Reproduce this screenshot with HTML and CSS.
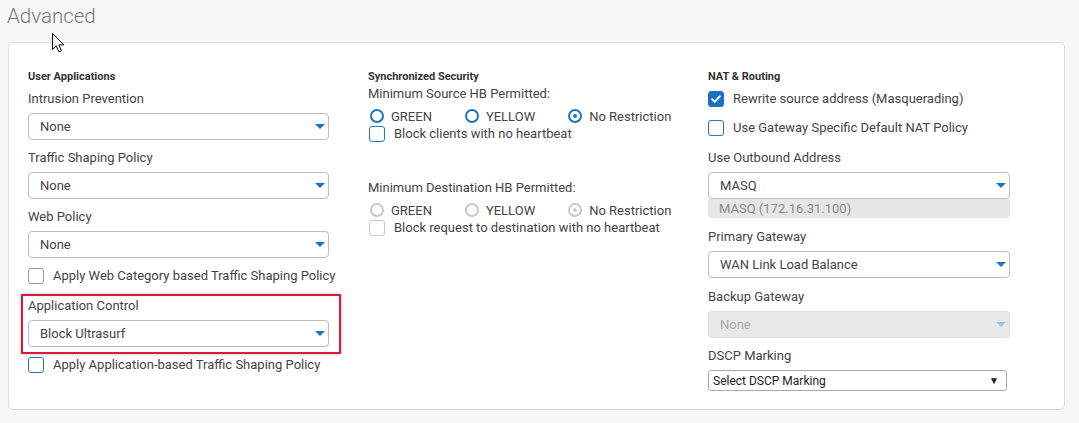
FILE: index.html
```html
<!DOCTYPE html>
<html>
<head>
<meta charset="utf-8">
<link rel="stylesheet" href="styles.css">
</head>
<body>
<h1 class="title">Advanced</h1>
<div class="card">
  <div class="col">
    <div class="heading">User Applications</div>
    <div class="group">
      <div class="label">Intrusion Prevention</div>
      <div class="select"><span>None</span><i class="caret"></i></div>
    </div>
    <div class="group">
      <div class="label">Traffic Shaping Policy</div>
      <div class="select"><span>None</span><i class="caret"></i></div>
    </div>
    <div class="group">
      <div class="label">Web Policy</div>
      <div class="select"><span>None</span><i class="caret"></i></div>
    </div>
    <div class="check"><i class="box"></i>Apply Web Category based Traffic Shaping Policy</div>
    <div class="highlight">
      <div class="label">Application Control</div>
      <div class="select"><span>Block Ultrasurf</span><i class="caret"></i></div>
    </div>
    <div class="check check-after"><i class="box box-blue"></i>Apply Application-based Traffic Shaping Policy</div>
  </div>

  <div class="col">
    <div class="heading">Synchronized Security</div>
    <div class="label label-tight">Minimum Source HB Permitted:</div>
    <div class="radios">
      <div class="radio"><i class="dot"></i>GREEN</div>
      <div class="radio"><i class="dot"></i>YELLOW</div>
      <div class="radio"><i class="dot dot-on"></i>No Restriction</div>
    </div>
    <div class="check check-tight"><i class="box box-blue"></i>Block clients with no heartbeat</div>
    <div class="label label-dest">Minimum Destination HB Permitted:</div>
    <div class="radios disabled">
      <div class="radio"><i class="dot"></i>GREEN</div>
      <div class="radio"><i class="dot"></i>YELLOW</div>
      <div class="radio"><i class="dot dot-on"></i>No Restriction</div>
    </div>
    <div class="check check-tight disabled"><i class="box"></i>Block request to destination with no heartbeat</div>
  </div>

  <div class="col">
    <div class="heading">NAT &amp; Routing</div>
    <div class="check check-first"><i class="box box-checked"><svg viewBox="0 0 16 16" width="16" height="16"><path d="M3.5 8.2 L6.6 11.2 L12.5 4.8" fill="none" stroke="#fff" stroke-width="2.2" stroke-linecap="round" stroke-linejoin="round"/></svg></i>Rewrite source address (Masquerading)</div>
    <div class="check check-second"><i class="box box-blue"></i>Use Gateway Specific Default NAT Policy</div>
    <div class="group group-r">
      <div class="label">Use Outbound Address</div>
      <div class="select"><span>MASQ</span><i class="caret"></i></div>
      <div class="sub">MASQ (172.16.31.100)</div>
    </div>
    <div class="group group-r">
      <div class="label">Primary Gateway</div>
      <div class="select"><span>WAN Link Load Balance</span><i class="caret"></i></div>
    </div>
    <div class="group group-r">
      <div class="label">Backup Gateway</div>
      <div class="select select-disabled"><span>None</span><i class="caret"></i></div>
    </div>
    <div class="group group-r group-dscp">
      <div class="label">DSCP Marking</div>
      <div class="native"><span>Select DSCP Marking</span><span class="narrow">&#9660;</span></div>
    </div>
  </div>
</div>
<svg class="cursor" width="13" height="20" viewBox="0 0 13 20"><path d="M0.5 0.5 L0.5 16.5 L4.3 12.9 L6.8 18.8 L9.4 17.7 L6.9 11.9 L11.8 11.9 Z" fill="#fff" stroke="#000" stroke-width="1" stroke-linejoin="miter"/></svg>
</body>
</html>
```

FILE: styles.css
```css
* { box-sizing: border-box; }
html, body { margin: 0; padding: 0; }
body {
  background: #f7f7f7;
  font-family: Roboto, "Liberation Sans", Arial, sans-serif;
  color: #444;
  font-size: 13px;
  width: 1079px;
  height: 423px;
  position: relative;
  overflow: hidden;
}
.title {
  margin: 0;
  padding: 4px 0 0 7px;
  height: 42px;
  font-size: 20.5px;
  line-height: 24px;
  font-weight: 300;
  color: #777;
}
.card {
  margin: 0 14px 0 8px;
  height: 368px;
  background: #fff;
  border: 1px solid #dedede;
  border-radius: 5px;
  padding: 27px 0 0 19px;
  display: grid;
  grid-template-columns: 340px 340px 340px;
  align-items: start;
}
.col { display: flex; flex-direction: column; }
.heading {
  font-size: 11px;
  line-height: 14px;
  font-weight: 700;
  color: #333;
  margin-bottom: 6px;
}
.label { line-height: 18px; margin-bottom: 5px; white-space: nowrap; }
.group { margin-bottom: 9px; width: 301px; }
.select {
  height: 27px;
  border: 1px solid #bdbdbd;
  border-radius: 4px;
  background: #fff;
  display: flex;
  align-items: center;
  justify-content: space-between;
  padding: 0 3px 0 11px;
  color: #444;
}
.caret {
  width: 0; height: 0;
  border-left: 5px solid transparent;
  border-right: 5px solid transparent;
  border-top: 5px solid #1c74c8;
}
.select-disabled { background: #e8e8e8; border-color: #e0e0e0; color: #aaa; }
.select-disabled .caret { border-top-color: #9cc7ec; }
.check {
  display: flex;
  align-items: center;
  line-height: 18px;
  height: 18px;
  white-space: nowrap;
}
.box {
  width: 16px; height: 16px;
  border: 1px solid #9a9a9a;
  border-radius: 3px;
  margin-right: 9px;
  background: #fff;
  display: flex;
  align-items: center;
  justify-content: center;
  flex: none;
}
.box-blue { border-color: #2b73bf; }
.box-checked { background: #1d6fc4; border-color: #1d6fc4; }
.box-checked svg { display: block; }
.highlight {
  margin: 9px 0 0 -7px;
  width: 320px;
  border: 2px solid #e0173d;
  padding: 1px 10px 5px 5px;
  box-shadow: 0 0 4px rgba(0,0,0,0.25);
}
.check-after { margin-top: 2px; }
.label-tight { margin-top: -5px; margin-bottom: 4px; }
.label-dest { margin-top: 36px; margin-bottom: 4px; }
.radios { display: flex; align-items: center; height: 18px; }
.radio {
  display: flex;
  align-items: center;
  margin-right: 31px;
  white-space: nowrap;
}
.dot {
  width: 14px; height: 14px;
  border: 2px solid #1c74c8;
  border-radius: 50%;
  margin: 0 7px 0 2px;
  display: flex;
  align-items: center;
  justify-content: center;
  flex: none;
}
.dot-on::after {
  content: "";
  width: 4px; height: 4px;
  border-radius: 50%;
  background: #1c74c8;
}
.disabled .dot { border-color: #c9c9c9; }
.disabled .dot-on::after { background: #c9c9c9; }
.disabled .box { border-color: #c9c9c9; }
.check-tight .box { margin-left: 1px; }
.check-first { margin-top: 0; }
.check-second { margin-top: 11px; }
.group-r { margin-top: 12px; margin-bottom: 0; width: 302px; }
.group-r + .group-r { margin-top: 10px; }
.group-r.group-dscp { margin-top: 9px; }
.sub {
  height: 19px;
  background: #e6e6e6;
  border-radius: 0 0 4px 4px;
  color: #8a8a8a;
  line-height: 19px;
  padding-left: 11px;
}
.native {
  width: 299px;
  height: 21px;
  border: 1px solid #a9a9a9;
  border-radius: 3px;
  display: flex;
  align-items: center;
  justify-content: space-between;
  padding: 0 7px 0 4px;
  font-size: 12px;
  color: #222;
}
.narrow { font-size: 10px; color: #222; }
.cursor { position: absolute; left: 52px; top: 33px; }
```
